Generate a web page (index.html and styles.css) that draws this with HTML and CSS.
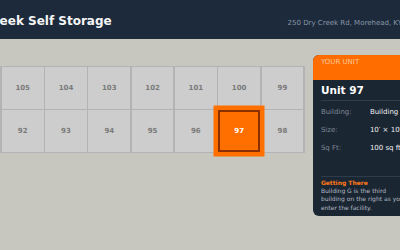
FILE: index.html
```html
<!DOCTYPE html>
<html lang="en">
<head>
  <meta charset="UTF-8" />
  <meta name="viewport" content="width=device-width, initial-scale=1.0"/>
  <title>Dry Creek Self Storage - Unit Map</title>
  <link rel="stylesheet" href="styles.css">
</head>
<body>
  <div class="app">
    <header class="topbar">
      <h1 class="brand">Dry Creek Self Storage</h1>
      <span class="address">250 Dry Creek Rd, Morehead, KY</span>
    </header>

    <main class="main">
      <div class="unit-grid">
        <div class="unit">106</div>
        <div class="unit">105</div>
        <div class="unit">104</div>
        <div class="unit">103</div>
        <div class="unit">102</div>
        <div class="unit">101</div>
        <div class="unit">100</div>
        <div class="unit">99</div>
        <div class="unit">91</div>
        <div class="unit">92</div>
        <div class="unit">93</div>
        <div class="unit">94</div>
        <div class="unit">95</div>
        <div class="unit">96</div>
        <div class="unit active">97</div>
        <div class="unit">98</div>
      </div>

      <aside class="card">
        <div class="card-head">YOUR UNIT</div>
        <div class="card-body">
          <div class="card-title">Unit 97</div>
          <dl class="facts">
            <dt>Building:</dt><dd>Building G</dd>
            <dt>Size:</dt><dd>10′ × 10′</dd>
            <dt>Sq Ft:</dt><dd>100 sq ft</dd>
          </dl>
          <div class="directions">
            <h3>Getting There</h3>
            <p>Building G is the third building on the right as you enter the facility.</p>
          </div>
        </div>
      </aside>
    </main>
  </div>
</body>
</html>
```

FILE: styles.css
```css
body {
  margin: 0;
  padding: 0;
  background: #c8c7bf;
  font-family: 'DejaVu Sans', Verdana, sans-serif;
  overflow: hidden;
  width: 400px;
  height: 250px;
}

.app {
  width: 497px;
  margin-left: -61px;
}

/* header */
.topbar {
  box-sizing: border-box;
  height: 39px;
  background: #1c2a3b;
  display: flex;
  justify-content: space-between;
  align-items: baseline;
  padding: 14px 34px 0 18px;
}

.brand {
  margin: 0;
  font-size: 12px;
  line-height: 14px;
  font-weight: bold;
  color: #f4f5f6;
}

.address {
  font-size: 7px;
  color: #8a97a8;
}

/* map + card */
.main {
  display: flex;
  align-items: flex-start;
  gap: 8px;
  padding: 16px 18px;
}

.unit-grid {
  margin-top: 10.5px;
  display: grid;
  grid-template-columns: repeat(8, 41.8px);
  grid-auto-rows: 41.5px;
  gap: 1.5px;
  padding: 1.5px;
  background: #b3b3b3;
}

.unit {
  background: #cdcdcd;
  display: flex;
  align-items: center;
  justify-content: center;
  font-size: 7px;
  font-weight: bold;
  color: #7a7a7a;
}

.unit.active {
  box-sizing: border-box;
  background: #ff6f00;
  border: 2px solid #8a2f00;
  box-shadow: 0 0 0 4.5px #ff7000;
  color: #fff;
  position: relative;
  z-index: 1;
}

.card {
  width: 105px;
  flex-shrink: 0;
  border-radius: 6px;
  overflow: hidden;
  background: #1b2633;
}

.card-head {
  height: 25px;
  box-sizing: border-box;
  padding: 3px 8px 0;
  background: #ff6d00;
  color: #ffc79a;
  font-size: 7px;
  line-height: 8px;
}

.card-body {
  padding: 3.5px 8px 4px;
}

.card-title {
  font-size: 10.5px;
  line-height: 13px;
  font-weight: bold;
  color: #fff;
  padding-bottom: 3px;
  border-bottom: 1px solid #2f3c4c;
}

.facts {
  margin: 0;
  padding: 2px 0 19px;
  display: grid;
  grid-template-columns: 49px 1fr;
  font-size: 7px;
  line-height: 18px;
  border-bottom: 1px solid #2f3c4c;
}

.facts dt {
  color: #7b8694;
}

.facts dd {
  margin: 0;
  color: #eef0f2;
  white-space: nowrap;
}

.directions {
  padding-top: 2px;
}

.directions h3 {
  margin: 0;
  font-size: 6px;
  line-height: 8px;
  color: #ff7a1a;
}

.directions p {
  margin: 0;
  font-size: 6px;
  line-height: 8.6px;
  color: #b3bac3;
}
```
